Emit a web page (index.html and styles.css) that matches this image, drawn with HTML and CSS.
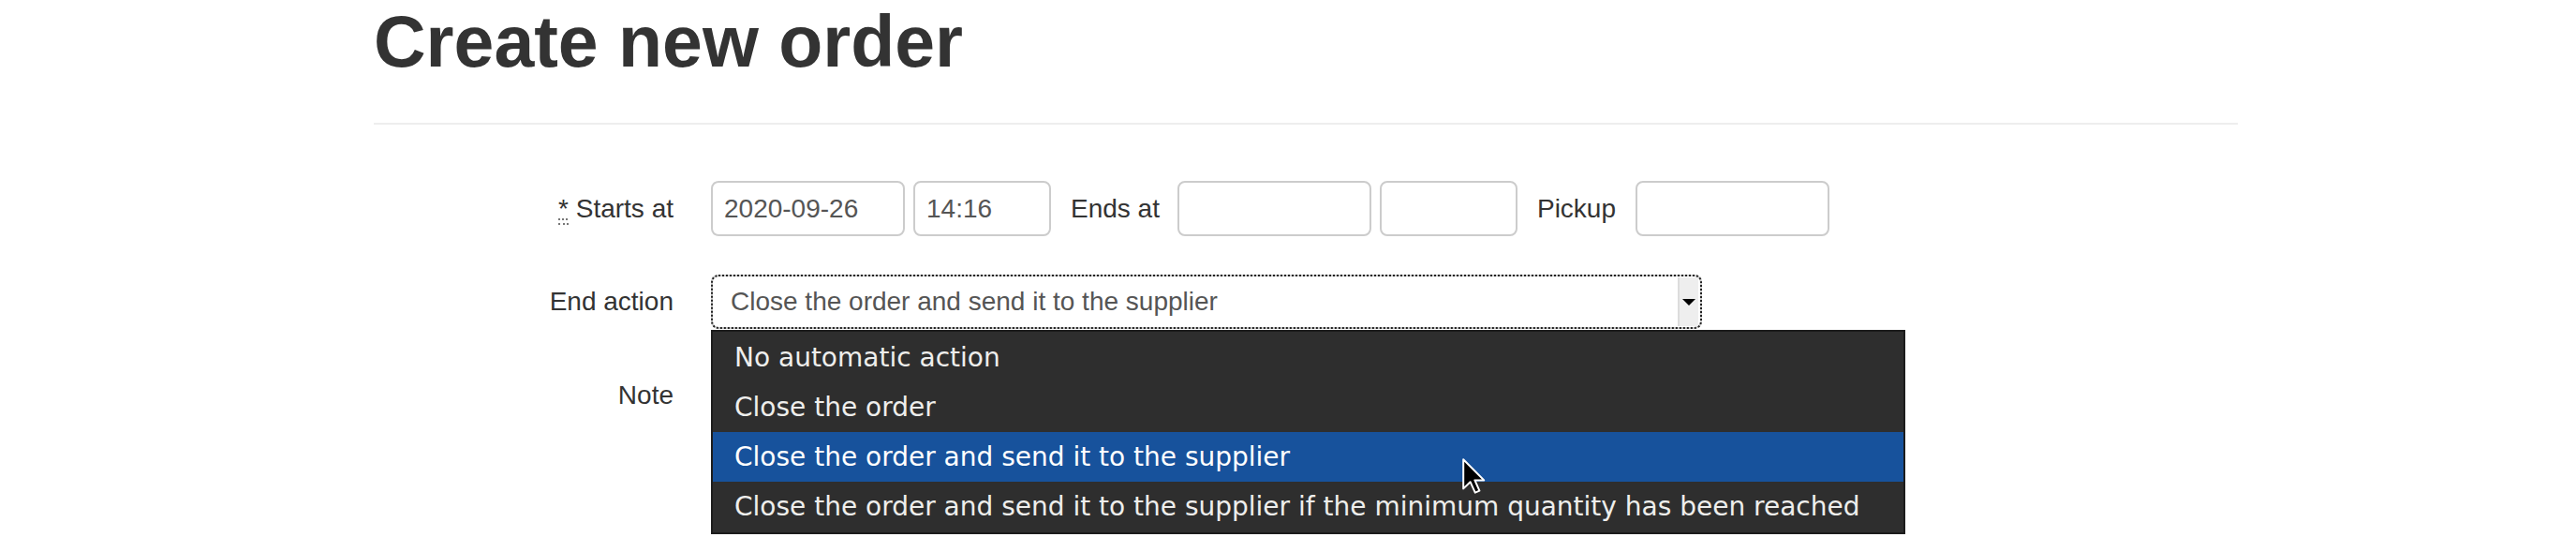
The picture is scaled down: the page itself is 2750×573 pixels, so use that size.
FILE: index.html
```html
<!DOCTYPE html>
<html lang="en">
<head>
<meta charset="utf-8">
<title>Create new order</title>
<link rel="stylesheet" href="styles.css">
</head>
<body>
<div class="container">
  <h1 class="title">Create new order</h1>
  <hr class="rule">
  <form class="form">
    <label class="lbl"><abbr class="req" title="required">*</abbr> Starts at</label>
    <div class="controls">
      <input class="inp w-date" type="text" value="2020-09-26">
      <input class="inp w-time gap-s" type="text" value="14:16">
      <span class="inline-lbl gap-l">Ends at</span>
      <input class="inp w-date gap-m" type="text" value="">
      <input class="inp w-time gap-s" type="text" value="">
      <span class="inline-lbl gap-l">Pickup</span>
      <input class="inp w-date gap-l" type="text" value="">
    </div>

    <label class="lbl">End action</label>
    <div class="controls select-wrap">
      <div class="select">
        <span class="select-text">Close the order and send it to the supplier</span>
        <span class="select-btn"><span class="tri"></span></span>
      </div>
      <div class="dropdown">
        <div class="opt">No automatic action</div>
        <div class="opt">Close the order</div>
        <div class="opt opt-active">Close the order and send it to the supplier</div>
        <div class="opt">Close the order and send it to the supplier if the minimum quantity has been reached</div>
        <svg class="cursor" width="25" height="38" viewBox="0 0 12.5 19" aria-hidden="true">
          <path d="M0.6 0.6 L0.6 16.2 L4.3 12.6 L6.9 18.3 L9.2 17.3 L6.7 11.7 L11.6 11.7 Z" fill="#000" stroke="#fff" stroke-width="1" stroke-linejoin="round"/>
        </svg>
      </div>
    </div>

    <label class="lbl lbl-top">Note</label>
    <div class="controls controls-top">
      <textarea class="note" rows="4"></textarea>
    </div>
  </form>
</div>
</body>
</html>
```

FILE: styles.css
```css
html, body {
  margin: 0;
  padding: 0;
  background: #fff;
}

body {
  font-family: "Liberation Sans", Arial, sans-serif;
  color: #333;
  min-height: 573px;
}

.container {
  margin-left: 399px;
  width: 1990px;
}

.title {
  margin: 0;
  font-size: 77px;
  line-height: 88px;
  font-weight: 700;
  color: #333;
}

.rule {
  margin: 43px 0 0 0;
  border: 0;
  border-top: 2px solid #eee;
  height: 0;
}

.form {
  margin-top: 60px;
  display: grid;
  grid-template-columns: 320px 1fr;
  grid-template-rows: 59px 58px 160px;
  column-gap: 40px;
  row-gap: 41px;
}

.lbl {
  font-size: 28px;
  color: #333;
  text-align: right;
  align-self: center;
  white-space: nowrap;
}

.lbl-top {
  align-self: start;
  line-height: 59px;
}

.req {
  text-decoration: underline dotted #777;
  text-decoration-thickness: 2px;
  text-underline-offset: 2px;
  border-bottom: 2px dotted #777;
  cursor: help;
}

.controls {
  display: flex;
  align-items: center;
}

.controls-top {
  align-items: flex-start;
}

.inp {
  box-sizing: border-box;
  height: 59px;
  border: 2px solid #ccc;
  border-radius: 8px;
  padding: 0 12px;
  margin: 0;
  font-family: "Liberation Sans", Arial, sans-serif;
  font-size: 28px;
  color: #555;
  background: #fff;
}

.w-date { width: 207px; }
.w-time { width: 147px; }

.gap-s { margin-left: 9px; }
.gap-m { margin-left: 19px; }
.gap-l { margin-left: 21px; }

.inline-lbl {
  font-size: 28px;
  color: #333;
}

.select-wrap {
  position: relative;
  align-items: stretch;
}

.select {
  box-sizing: border-box;
  width: 1058px;
  height: 58px;
  border: 2px solid #ccc;
  border-radius: 8px;
  outline: 2px dotted #222;
  outline-offset: -2px;
  display: flex;
  align-items: center;
  padding-left: 19px;
  background: #fff;
}

.select-text {
  flex: 1;
  font-size: 28px;
  color: #555;
  white-space: nowrap;
}

.select-btn {
  align-self: stretch;
  width: 20px;
  margin: 1px 2px 1px 0;
  background: #eeeeee;
  border-left: 2px solid #dcdcdc;
  display: flex;
  align-items: center;
  justify-content: center;
}

.tri {
  width: 0;
  height: 0;
  border-left: 7px solid transparent;
  border-right: 7px solid transparent;
  border-top: 7px solid #000;
}

.dropdown {
  position: absolute;
  left: 0;
  top: 59px;
  width: 1275px;
  box-sizing: border-box;
  margin: 0;
  padding: 1px 0;
  background: #2e2e2e;
  border: 2px solid #1c1c1c;
  z-index: 10;
}

.opt {
  height: 53px;
  line-height: 53px;
  padding-left: 23px;
  font-family: "DejaVu Sans", Verdana, sans-serif;
  font-size: 28px;
  color: #eeeeec;
  white-space: nowrap;
}

.opt-active {
  background: #17529c;
  color: #ffffff;
}

.cursor {
  position: absolute;
  left: 800px;
  top: 135px;
}

.note {
  box-sizing: border-box;
  width: 1058px;
  height: 160px;
  border: 2px solid #ccc;
  border-radius: 8px;
  font-family: "Liberation Sans", Arial, sans-serif;
  font-size: 28px;
  resize: none;
}
```
